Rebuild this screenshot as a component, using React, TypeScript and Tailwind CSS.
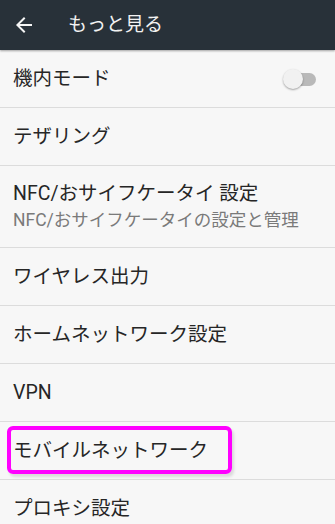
import React from "react";

const font = { fontFamily: 'Roboto, "Noto Sans CJK JP", "Noto Sans", sans-serif' };

function Row({ title, sub, tall, children }: { title: string; sub?: string; tall?: boolean; children?: React.ReactNode }) {
  return (
    <div
      className={`relative flex items-center border-b border-[#dcdcdc] pl-[13px] pr-[19px] ${tall ? "h-[82px]" : "h-[58px]"}`}
    >
      <div className="flex flex-1 flex-col">
        <div className="text-[19.5px] leading-[26px] text-[#262626]">{title}</div>
        {sub && <div className="text-[17.5px] leading-[26px] text-[#7a7a7a]">{sub}</div>}
      </div>
      {children}
    </div>
  );
}

export default function App() {
  return (
    <div className="h-[524px] w-[335px] overflow-hidden bg-[#f7f7f7]" style={font}>
      <div className="relative z-10 flex h-[50px] items-center bg-[#283139] shadow-[0_1px_2px_rgba(0,0,0,0.35)]">
        <svg className="ml-[12px] h-[24px] w-[24px]" viewBox="0 0 24 24" fill="#f5f5f5">
          <path d="M20 11H7.83l5.59-5.59L12 4l-8 8 8 8 1.41-1.41L7.83 13H20v-2z" />
        </svg>
        <div className="ml-[32px] text-[19px] text-[#f2f2f2]">もっと見る</div>
      </div>
      <Row title="機内モード">
        <div className="relative h-[20px] w-[33px]">
          <div className="absolute left-[3px] top-[4px] h-[13px] w-[30px] rounded-full bg-[#b9b9b9]" />
          <div className="absolute left-0 top-0 h-[20px] w-[20px] rounded-full bg-[#f1f1f1] shadow-[0_1px_2px_rgba(0,0,0,0.35)]" />
        </div>
      </Row>
      <Row title="テザリング" />
      <Row title="NFC/おサイフケータイ 設定" sub="NFC/おサイフケータイの設定と管理" tall />
      <Row title="ワイヤレス出力" />
      <Row title="ホームネットワーク設定" />
      <Row title="VPN" />
      <div className="relative">
        <Row title="モバイルネットワーク" />
        <div className="absolute left-[7px] top-[4px] h-[48px] w-[225px] rounded-[6px] border-[4px] border-[#ff00ff] shadow-[2px_3px_3px_rgba(0,0,0,0.12)]" />
      </div>
      <Row title="プロキシ設定" />
    </div>
  );
}
